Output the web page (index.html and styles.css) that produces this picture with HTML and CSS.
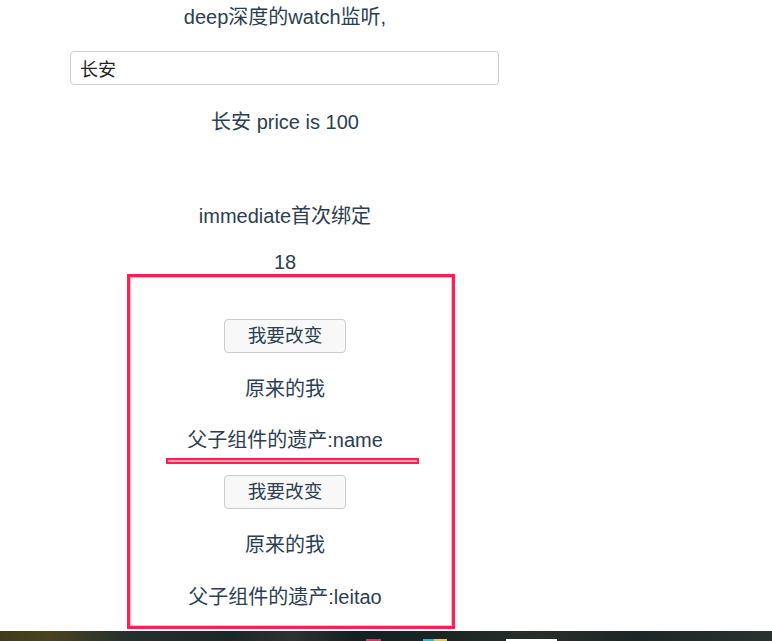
FILE: index.html
```html
<!DOCTYPE html>
<html lang="zh">
<head>
<meta charset="utf-8">
<title>watch</title>
<link rel="stylesheet" href="styles.css">
</head>
<body>
<div class="page">
  <div class="app">
    <p class="title">deep深度的watch监听,</p>
    <input class="field" type="text" value="长安">
    <p class="line price">长安 price is 100</p>
    <p class="line imm">immediate首次绑定</p>
    <p class="line age">18</p>
    <button class="btn first">我要改变</button>
    <p class="line gap21">原来的我</p>
    <p class="line gap21">父子组件的遗产:name</p>
    <button class="btn second">我要改变</button>
    <p class="line gap21">原来的我</p>
    <p class="line gap22">父子组件的遗产:leitao</p>
    <div class="mark-box"></div>
    <div class="mark-line"></div>
  </div>
  <div class="taskbar">
    <span class="tb-icons"></span>
    <span class="tb-white"></span>
  </div>
</div>
</body>
</html>
```

FILE: styles.css
```css
html, body {
  margin: 0;
  padding: 0;
  background: #ffffff;
}

.page {
  min-height: 641px;
  display: flex;
  flex-direction: column;
}

.app {
  position: relative;
  width: 570px;
  text-align: center;
  color: #2c3e50;
  font-family: "Liberation Sans", "Noto Sans CJK SC", sans-serif;
  font-size: 20px;
}

.title {
  margin: 2px 0 0;
  font-size: 20px;
  line-height: 30px;
}

.field {
  display: block;
  box-sizing: border-box;
  margin: 19px 0 0 70px;
  width: 429px;
  height: 34px;
  padding: 0 9px;
  border: 1px solid #cfcfcf;
  border-radius: 4px;
  font-family: "Liberation Sans", "Noto Sans CJK SC", sans-serif;
  font-size: 18px;
  color: #222;
  background: #fff;
  outline: none;
}

.line {
  margin: 0;
  line-height: 30px;
}

.price { margin-top: 22px; }
.imm { margin-top: 64px; }
.age { margin-top: 19px; line-height: 24px; }
.gap21 { margin-top: 21px; }
.gap22 { margin-top: 22px; }

.btn {
  display: block;
  box-sizing: border-box;
  width: 122px;
  height: 34px;
  margin: 0 auto;
  padding: 0;
  border: 1px solid #cccccc;
  border-radius: 4px;
  background: #f8f8f8;
  color: #2c3e50;
  font-family: "Liberation Sans", "Noto Sans CJK SC", sans-serif;
  font-size: 18.7px;
  line-height: 32px;
}

.btn.first { margin-top: 45px; }
.btn.second { margin-top: 20px; }

.mark-box {
  position: absolute;
  left: 127px;
  top: 274px;
  width: 328px;
  height: 355px;
  box-sizing: border-box;
  border: 3px solid #ff1f50;
  box-shadow: inset 0 0 0 1px rgba(255, 120, 150, 0.5);
}

.mark-line {
  position: absolute;
  left: 166px;
  top: 458px;
  width: 253px;
  height: 6px;
  box-sizing: border-box;
  border: 2px solid #ff1f50;
  background: #ff9fb3;
}

.taskbar {
  margin-top: auto;
  height: 10px;
  position: relative;
  background: linear-gradient(90deg, #3e3a1c 0%, #4a4320 6%, #26302c 16%, #1c2727 30%, #2b3330 38%, #142021 46%, #1a2424 55%, #2a2e2a 70%, #1d2626 82%, #2a3230 100%);
}

.tb-icons {
  position: absolute;
  left: 366px;
  bottom: 0;
  width: 110px;
  height: 2px;
  background: linear-gradient(90deg, #e0306a 0 14%, transparent 14% 52%, #1fc0d0 52% 62%, #e0d040 62% 74%, transparent 74%);
}

.tb-white {
  position: absolute;
  left: 506px;
  bottom: 0;
  width: 51px;
  height: 2px;
  background: #ffffff;
}
```
